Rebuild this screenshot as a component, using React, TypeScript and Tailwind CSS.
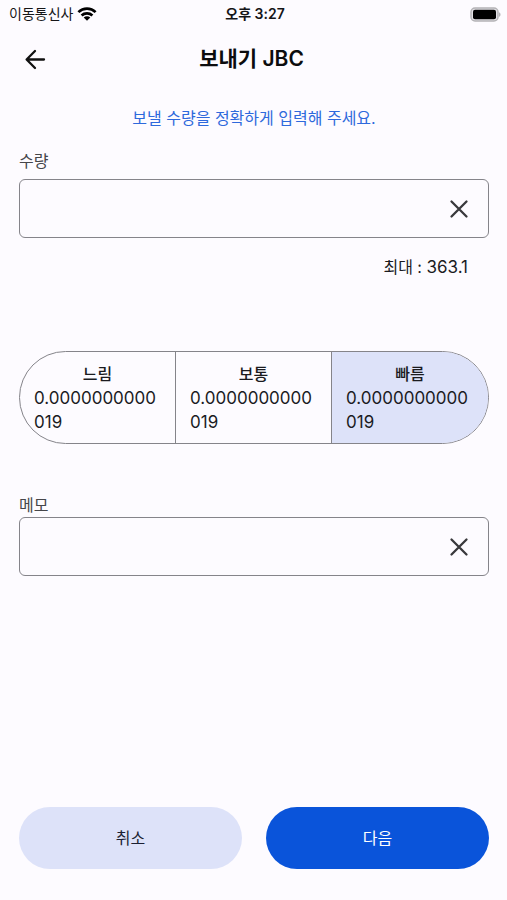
import React, { useState } from 'react';

const FEES = [
    { id: 'slow', label: '느림', fee: '0.0000000000019' },
    { id: 'normal', label: '보통', fee: '0.0000000000019' },
    { id: 'fast', label: '빠름', fee: '0.0000000000019' },
];

const WifiIcon: React.FC = () => (
    <svg width="20" height="14" viewBox="0 0 20 14" fill="none" stroke="#000" strokeWidth="2.7" aria-hidden="true">
        <path d="M1.4 5.1C6.2 .5 13.8 .5 18.6 5.1" />
        <path d="M4.6 8.4C7.6 5.6 12.4 5.6 15.4 8.4" />
        <path d="M10 13.8L6.7 10.6C8.6 8.9 11.4 8.9 13.3 10.6Z" fill="#000" stroke="none" />
    </svg>
);

const BatteryIcon: React.FC = () => (
    <svg width="31" height="15" viewBox="0 0 31 15" aria-hidden="true">
        <rect x="1" y="1" width="27" height="13" rx="4" fill="#e3e1e6" stroke="#b4b3b6" strokeWidth="1.5" />
        <rect x="3" y="2.8" width="23" height="9.4" rx="2" fill="#000" />
        <path d="M29 5.2C31 6 31 9 29 9.8Z" fill="#b4b3b6" />
    </svg>
);

const BackIcon: React.FC = () => (
    <svg width="24" height="24" viewBox="0 0 24 24" fill="none" stroke="#111" strokeWidth="2.3" strokeLinecap="round" strokeLinejoin="round" aria-hidden="true">
        <path d="M20 12.5H3M11 4L2.6 12.5L11 21" />
    </svg>
);

const ClearIcon: React.FC = () => (
    <svg width="20" height="20" viewBox="0 0 20 20" fill="none" stroke="#39393c" strokeWidth="2.3" strokeLinecap="round" aria-hidden="true">
        <path d="M2.5 2.5L17.5 17.5M17.5 2.5L2.5 17.5" />
    </svg>
);

interface FieldProps {
    id: string;
    label: string;
    value: string;
    onChange: (value: string) => void;
}

const Field: React.FC<FieldProps> = ({ id, label, value, onChange }) => (
    <>
        <label htmlFor={id} className="block text-base leading-6 text-[#46464a]">{label}</label>
        <div className="flex items-center h-[59px] border border-[#85848a] rounded-md pr-[19px]">
            <input
                id={id}
                type="text"
                value={value}
                onChange={e => onChange(e.target.value)}
                className="flex-1 min-w-0 h-full px-4 bg-transparent text-[17px] outline-none"
            />
            <button type="button" aria-label={`${label} 지우기`} onClick={() => onChange('')}>
                <ClearIcon />
            </button>
        </div>
    </>
);

const App: React.FC = () => {
    const [amount, setAmount] = useState('');
    const [memo, setMemo] = useState('');
    const [speed, setSpeed] = useState('fast');

    return (
        <div className="min-h-screen flex flex-col bg-[#fdfbff] text-[#1b1b1f] font-['Inter','Noto_Sans_CJK_KR',sans-serif]">
            <div className="grid grid-cols-3 items-center h-7 pl-[9px] pr-[6px] text-sm text-[#151517]">
                <div className="flex items-center gap-1">
                    <span>이동통신사</span>
                    <WifiIcon />
                </div>
                <span className="text-center font-semibold">오후 3:27</span>
                <div className="flex justify-end">
                    <BatteryIcon />
                </div>
            </div>

            <header className="grid grid-cols-[24px_1fr_28px] items-center h-[62px] px-6">
                <button type="button" aria-label="뒤로">
                    <BackIcon />
                </button>
                <h1 className="text-center text-[21px] leading-7 font-semibold text-[#0c0c0e]">보내기 JBC</h1>
            </header>

            <main className="flex-1 flex flex-col pl-[19px] pr-[18px]">
                <p className="mt-4 text-center text-base leading-6 text-[#2e69dc]">보낼 수량을 정확하게 입력해 주세요.</p>

                <div className="mt-[19px] flex flex-col gap-[6px]">
                    <Field id="amount" label="수량" value={amount} onChange={setAmount} />
                </div>
                <p className="mt-[17px] pr-[21px] text-right text-base leading-6">
                    최대 : <span className="text-[17px]">{363.1}</span>
                </p>

                <div role="radiogroup" aria-label="수수료" className="mt-[72px] grid grid-cols-3 overflow-hidden rounded-full border border-[#85848a] divide-x divide-[#85848a]">
                    {FEES.map(({ id, label, fee }) => (
                        <label key={id} className="min-w-0 px-[14px] pt-[10px] pb-[9px] leading-6 cursor-pointer has-checked:bg-[#dde2f9]">
                            <input
                                type="radio"
                                name="speed"
                                value={id}
                                checked={speed === id}
                                onChange={() => setSpeed(id)}
                                className="sr-only"
                            />
                            <span className="block text-center text-base leading-6 font-medium">{label}</span>
                            <span className="block text-[17px] leading-6 break-all">{fee}</span>
                        </label>
                    ))}
                </div>

                <div className="mt-[49px]">
                    <Field id="memo" label="메모" value={memo} onChange={setMemo} />
                </div>
            </main>

            <footer className="grid grid-cols-2 gap-6 pl-[19px] pr-[18px] pb-[31px]">
                <button type="button" className="h-[62px] rounded-full bg-[#dde2f9] text-base text-[#1b1f33]">취소</button>
                <button type="button" className="h-[62px] rounded-full bg-[#0a54da] text-base text-white">다음</button>
            </footer>
        </div>
    );
};

export default App;
